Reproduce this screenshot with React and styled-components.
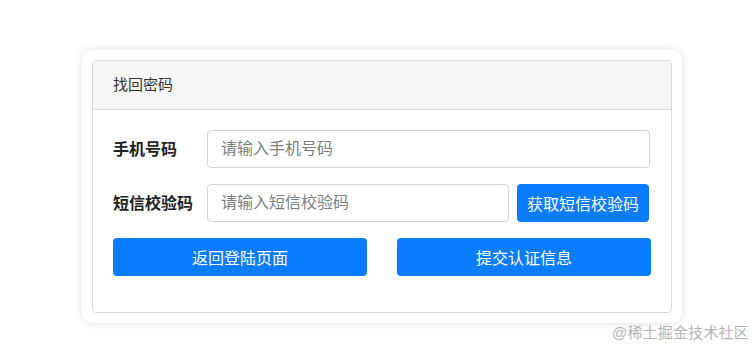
import React from 'react';
import styled, { createGlobalStyle } from 'styled-components';

const GlobalStyle = createGlobalStyle`
  html, body {
    margin: 0;
    padding: 0;
    background: #fff;
  }
  body {
    font-family: "Liberation Sans", "Noto Sans CJK SC", sans-serif;
    color: #212529;
  }
`;

const Page = styled.div`
  position: relative;
  width: 755px;
  height: 350px;
  overflow: hidden;
  padding: 50px 0 0 82px;
  box-sizing: border-box;
`;

const Shell = styled.div`
  width: 600px;
  padding: 10px;
  box-sizing: border-box;
  background: #fff;
  border-radius: 10px;
  box-shadow: 0 0 10px rgba(0, 0, 0, 0.12);
`;

const Card = styled.div`
  border: 1px solid #dcdcdc;
  border-radius: 4px;
  background: #fff;
`;

const CardHeader = styled.div`
  height: 48px;
  line-height: 48px;
  padding: 0 20px;
  background: #f6f6f6;
  border-bottom: 1px solid #dcdcdc;
  border-radius: 4px 4px 0 0;
  font-size: 15px;
  color: #333;
`;

const CardBody = styled.div`
  padding: 20px 21px 36px 20px;
  display: flex;
  flex-direction: column;
  gap: 16px;
`;

const Row = styled.div`
  display: flex;
  align-items: center;
  height: 38px;
  gap: 8px;
`;

const Label = styled.label`
  width: 86px;
  flex: none;
  font-size: 16px;
  font-weight: 700;
  color: #222;
  margin-top: -2px;
`;

const Input = styled.input`
  flex: 1;
  min-width: 0;
  height: 38px;
  box-sizing: border-box;
  padding: 0 13px;
  border: 1px solid #ced4da;
  border-radius: 4px;
  font-family: inherit;
  font-size: 16px;
  color: #495057;
  outline: none;

  &::placeholder {
    color: #7a7f85;
  }
`;

const Button = styled.button`
  height: 38px;
  box-sizing: border-box;
  padding: 0 12px;
  border: none;
  border-radius: 4px;
  background: #0a7cff;
  color: #fff;
  font-family: inherit;
  font-size: 16px;
  white-space: nowrap;
  cursor: pointer;
  ${(p) => (p.$compact ? 'flex: none; width: 132px; padding: 0; margin-right: 1px;' : '')}
`;

const Actions = styled.div`
  display: grid;
  grid-template-columns: 254px 254px;
  column-gap: 30px;
`;

const Watermark = styled.div`
  position: absolute;
  right: 6px;
  bottom: 8px;
  font-size: 15px;
  color: #b4b4b4;
  letter-spacing: 0.2px;
`;

export default function App() {
  return (
    <>
      <GlobalStyle />
      <Page>
        <Shell>
          <Card>
            <CardHeader>找回密码</CardHeader>
            <CardBody>
              <Row>
                <Label>手机号码</Label>
                <Input placeholder="请输入手机号码" />
              </Row>
              <Row>
                <Label>短信校验码</Label>
                <Input placeholder="请输入短信校验码" />
                <Button $compact>获取短信校验码</Button>
              </Row>
              <Actions>
                <Button>返回登陆页面</Button>
                <Button>提交认证信息</Button>
              </Actions>
            </CardBody>
          </Card>
        </Shell>
        <Watermark>@稀土掘金技术社区</Watermark>
      </Page>
    </>
  );
}
